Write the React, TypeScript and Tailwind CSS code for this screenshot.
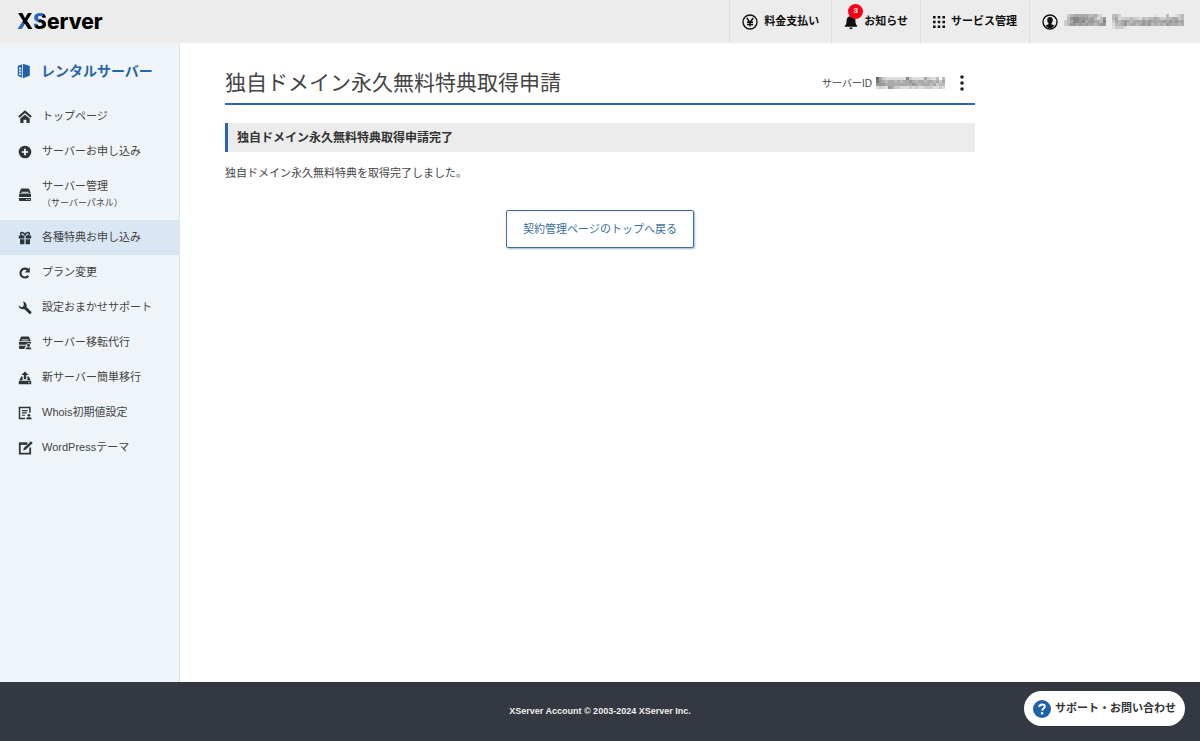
import type { ReactNode } from "react";

type Icon = () => ReactNode;

const HomeIcon: Icon = () => (
  <svg viewBox="0 0 14 14" className="h-3.5 w-3.5" fill="none" aria-hidden="true">
    <path d="M.8 7 7 1.700l6.200 5.300" stroke="currentColor" strokeWidth="2.200" />
    <path d="M2.300 8.600 7 4.700l4.700 3.900V13H8.500V9.800h-3V13H2.300z" fill="currentColor" />
  </svg>
);

const PlusIcon: Icon = () => (
  <svg viewBox="0 0 14 14" className="h-3.5 w-3.5" aria-hidden="true">
    <circle cx="7" cy="7" r="6.300" fill="currentColor" />
    <path d="M7 3.800v6.400M3.800 7h6.400" stroke="#fff" strokeWidth="1.700" />
  </svg>
);

const DriveIcon: Icon = () => (
  <svg viewBox="0 0 14 14" className="h-3.5 w-3.5" fill="currentColor" aria-hidden="true">
    <path d="M4 .6h6q1 0 1.400 1l1.400 3.800H1.200L2.600 1.600q.4-1 1.400-1zM1.800 6h10.400q.8 0 .8.800V9H1V6.800q0-.8.8-.8zM1 9.900h12v2.400q0 .8-.8.8H1.800q-.8 0-.8-.8z" />
    <path d="M3.600 4.300h6.800" stroke="#fff" strokeWidth=".9" />
    <path d="M8.200 11.500h1.100M10.600 11.500h1.100" stroke="#fff" strokeWidth="1" />
  </svg>
);

const GiftIcon: Icon = () => (
  <svg viewBox="0 0 14 14" className="h-3.5 w-3.5" aria-hidden="true">
    <path d="M.8 4.400h5.600v3H.8zM7.600 4.400h5.600v3H7.600zM2 8.200h4.400V13.200H2zM7.600 8.200H12V13.200H7.600z" fill="currentColor" />
    <path d="M7 4.400C6 1 2.600.8 2.600 2.800c0 1 .8 1.600 1.800 1.600M7 4.400c1-3.400 4.400-3.600 4.400-1.600 0 1-.8 1.600-1.800 1.600" fill="none" stroke="currentColor" strokeWidth="1.500" />
  </svg>
);

const ReloadIcon: Icon = () => (
  <svg viewBox="0 0 14 14" className="h-3.5 w-3.5" aria-hidden="true">
    <path d="M10.300 9.900A4.400 4.400 0 1 1 9.800 3.800" fill="none" stroke="currentColor" strokeWidth="2.200" />
    <path d="M11.800 1.300v5.200H6.700z" fill="currentColor" />
  </svg>
);

const WrenchIcon: Icon = () => (
  <svg viewBox="0 0 14 14" className="h-3.5 w-3.5" aria-hidden="true">
    <path
      d="M5 .6A4 4 0 0 1 8.500 5.900l4.600 4.600q.9 1.100-.1 2.100t-2.100 0L6.100 8A4 4 0 0 1 .6 4.300l2.500 2 2.200-.9.600-2.300z"
      fill="currentColor"
    />
  </svg>
);

const DriveUserIcon: Icon = () => (
  <svg viewBox="0 0 14 14" className="h-3.5 w-3.5" fill="currentColor" aria-hidden="true">
    <path d="M4 .6h6q1 0 1.400 1l1.400 3.600H1.200L2.600 1.600q.4-1 1.400-1zM1 6h12v1.600h-1a2.500 2.500 0 0 0-3.800 1.200H1zM1 9.800h7.200l-.2.800-1.400 1v1.500H1.800q-.8 0-.8-.8z" />
    <circle cx="10.500" cy="9.200" r="1.500" />
    <path d="M7.600 13.200q0-2 1.800-2h2.200q1.800 0 1.800 2z" />
    <path d="M3.600 3.900h6.800" stroke="#fff" strokeWidth=".9" />
  </svg>
);

const UploadIcon: Icon = () => (
  <svg viewBox="0 0 14 14" className="h-3.5 w-3.5" aria-hidden="true">
    <path d="M7 .4 10.600 4H8.200v4.200H5.800V4H3.400z" fill="currentColor" />
    <path d="M3.200 5.400h1.400v3.900h4.800V5.400h1.400l2 4H1.200zM.8 10h12.400v3.200H.8z" fill="currentColor" />
    <path d="M10 11.700h1.600" stroke="#fff" strokeWidth=".8" />
  </svg>
);

const WhoisIcon: Icon = () => (
  <svg viewBox="0 0 14 14" className="h-3.5 w-3.5" aria-hidden="true">
    <path d="M7 12.400H1.500V1.500h10.400v5.300" fill="none" stroke="currentColor" strokeWidth="1.500" />
    <path d="M4 4.600h5.600M4 6.900h4.800M4 9.200h3" stroke="currentColor" strokeWidth="1.100" />
    <circle cx="10.900" cy="9.300" r="1.400" fill="currentColor" />
    <path d="M8 13.200q0-2 1.800-2h2.200q1.800 0 1.800 2z" fill="currentColor" />
  </svg>
);

const EditIcon: Icon = () => (
  <svg viewBox="0 0 14 14" className="h-3.5 w-3.5 overflow-visible" aria-hidden="true">
    <path d="M9.400 2.400H1.800v10.200h10.400V6.600" fill="none" stroke="currentColor" strokeWidth="1.800" />
    <path d="M1 1.600h8v2.200H1z" fill="currentColor" />
    <path d="m5.200 9.400.6-2.400L13 .2l1.700 1.800-7.100 6.800z" fill="currentColor" />
  </svg>
);

const YenIcon: Icon = () => (
  <svg viewBox="0 0 16 16" className="h-4 w-4" fill="none" stroke="currentColor" aria-hidden="true">
    <circle cx="8" cy="8" r="7" strokeWidth="1.400" />
    <path d="m4.800 4 3.200 4.400L11.200 4M8 8v4.600M5 8.200h6M5 10.400h6" strokeWidth="1.500" />
  </svg>
);

const BellIcon: Icon = () => (
  <svg viewBox="0 0 14 16" className="h-4 w-3.5" fill="currentColor" aria-hidden="true">
    <path d="M7 1q1 0 1 1.200c2.300.5 3.400 2.100 3.400 4.300 0 3.300.7 4.300 1.800 5.300v1H.8v-1c1.100-1 1.800-2 1.800-5.300C2.600 4.300 3.700 2.700 6 2.200 6 1.400 6.300 1 7 1zM5.300 13.600h3.400a1.700 1.700 0 0 1-3.400 0z" />
  </svg>
);

const GridIcon: Icon = () => (
  <svg viewBox="0 0 12 12" className="h-3 w-3" fill="currentColor" aria-hidden="true">
    <path d="M0 0h2.600v2.600H0zM4.700 0h2.600v2.600H4.700zM9.400 0H12v2.600H9.400zM0 4.700h2.600v2.600H0zM4.700 4.700h2.600v2.600H4.700zM9.400 4.700H12v2.600H9.400zM0 9.400h2.600V12H0zM4.700 9.400h2.600V12H4.700zM9.400 9.400H12V12H9.400z" />
  </svg>
);

const UserIcon: Icon = () => (
  <svg viewBox="0 0 16 16" className="h-4 w-4" aria-hidden="true">
    <circle cx="8" cy="8" r="7" fill="none" stroke="currentColor" strokeWidth="1.400" />
    <path d="M8 3c1.800 0 2.800 1.200 2.800 2.900S9.900 8.700 9.500 9.200v1l3 1.400A6 6 0 0 1 8 14.400a6 6 0 0 1-4.500-2.800l3-1.400v-1C6.100 8.700 5.200 7.600 5.200 5.900S6.200 3 8 3z" fill="currentColor" />
  </svg>
);

const ServerLogo: Icon = () => (
  <svg viewBox="0 0 14 16" className="h-4 w-3.5" aria-hidden="true">
    <path d="M6 .8 12.800 3v9.800L6 15.200z" fill="#2161a9" />
    <path d="M5.200 1.200.8 3v9.800l4.400 2z" fill="#2161a9" />
    <path d="M2 4.600h2.200v2H2zM2 7.600h2.200v2H2zM2 10.600h2.200v1.800L2 11.800z" fill="#dfe9f4" />
  </svg>
);

const menu: { label: string; note?: string; icon: Icon; active?: boolean }[] = [
  { label: "トップページ", icon: HomeIcon },
  { label: "サーバーお申し込み", icon: PlusIcon },
  { label: "サーバー管理", note: "（サーバーパネル）", icon: DriveIcon },
  { label: "各種特典お申し込み", icon: GiftIcon, active: true },
  { label: "プラン変更", icon: ReloadIcon },
  { label: "設定おまかせサポート", icon: WrenchIcon },
  { label: "サーバー移転代行", icon: DriveUserIcon },
  { label: "新サーバー簡単移行", icon: UploadIcon },
  { label: "Whois初期値設定", icon: WhoisIcon },
  { label: "WordPressテーマ", icon: EditIcon },
];

// One hex digit per cell, 0 = dark, f = white, "." = empty
const nameCells = [
  ".cbaaaaabbacd...bbc...........d...b..dcb",
  ".b988999a9bdb9..badcccbccdbcbbabccbbaacb",
  "cba8898a99aab8..caba9abaaa9a9aaaa9a9a9aa",
  "cb99a9a9aaba99..dbba9baaba9a9babab9aaaba",
  "................dcccd...................",
];
const idCells = [
  "6acddddddd8cddddacddb.b",
  "79abaababaa9abaabaabaca",
  "999aaaaaaaaa9abaaabacbb",
  "dcdd9accdddcdcddcccddcd",
];

const Mosaic = ({ cells, size, label }: { cells: string[]; size: number; label: string }) => (
  <svg
    role="img"
    aria-label={label}
    width={cells[0].length * size}
    height={cells.length * 3}
    shapeRendering="crispEdges"
    className="shrink-0"
  >
    {cells.map((row, y) =>
      row.split("").map((c, x) =>
        c === "." ? null : (
          <rect key={`${x}-${y}`} x={x * size} y={y * 3} width={size} height="3" fill={`#${c}${c}${c}`} />
        )
      )
    )}
  </svg>
);

const Header = () => (
  <header className="flex h-[43px] items-stretch justify-between bg-[#ececec] text-[#111]">
    <a
      href="#"
      aria-label="XServer"
      className="flex items-center pl-[17px] font-[Inter,sans-serif] text-[21px] leading-none font-extrabold text-black"
    >
      <span className="bg-linear-to-tr from-[#2868b8] from-42% to-black to-42% bg-clip-text text-transparent">X</span>
      <span className="bg-linear-to-br from-[#2868b8] from-45% to-black to-45% bg-clip-text text-transparent">S</span>
      <span>erver</span>
    </a>
    <nav className="flex text-[11px] font-bold">
      <a href="#" className="flex items-center gap-1.5 border-l border-[#dcdcdc] px-3">
        <YenIcon />
        料金支払い
      </a>
      <a href="#" className="flex items-center gap-1.5 border-l border-[#dcdcdc] px-3">
        <span className="relative">
          <BellIcon />
          <span className="absolute -top-2.5 left-1 flex h-[15px] w-[15px] items-center justify-center rounded-full bg-[#fa0014] text-[8px] text-white">
            3
          </span>
        </span>
        お知らせ
      </a>
      <a href="#" className="flex items-center gap-1.5 border-l border-[#dcdcdc] px-3">
        <GridIcon />
        サービス管理
      </a>
      <a href="#" className="flex items-center gap-1.5 border-l border-[#dcdcdc] pr-4 pl-3">
        <UserIcon />
        <Mosaic cells={nameCells} size={3} label="アカウント名" />
      </a>
    </nav>
  </header>
);

const Sidebar = () => (
  <aside className="w-[180px] shrink-0 border-r border-[#dfe4e8] bg-[#eff4f8]">
    <a href="#" className="flex h-14 items-center gap-2.5 pl-[17px] text-sm font-bold text-[#2565a8]">
      <ServerLogo />
      レンタルサーバー
    </a>
    <ul>
      {menu.map(({ label, note, icon: ItemIcon, active }) => (
        <li key={label}>
          <a
            href="#"
            aria-current={active ? "page" : undefined}
            className={
              active
                ? "flex min-h-[35px] items-center gap-2.5 bg-[#d9e6f3] pl-[18px] text-[11px] text-[#444]"
                : "flex min-h-[35px] items-center gap-2.5 pl-[18px] text-[11px] text-[#444]"
            }
          >
            <span className="text-[#2e343b]">
              <ItemIcon />
            </span>
            <span className={note ? "py-2 leading-[18px]" : undefined}>
              {label}
              {note && <small className="block text-[9px] leading-[17px]">{note}</small>}
            </span>
          </a>
        </li>
      ))}
    </ul>
  </aside>
);

const Main = () => (
  <main className="min-w-0 flex-1 px-[45px] pt-5">
    <div className="max-w-[750px]">
      <div className="flex h-[42px] items-center justify-between border-b-2 border-[#2868b0]">
        <h1 className="text-[21px] text-[#444]">独自ドメイン永久無料特典取得申請</h1>
        <div className="flex items-center gap-1 text-[10px] text-[#444]">
          サーバーID
          <Mosaic cells={idCells} size={3} label="サーバーID" />
          <button type="button" aria-label="メニュー" className="px-[11px] py-1">
            <svg viewBox="0 0 4 16" className="h-4 w-1" fill="#222" aria-hidden="true">
              <circle cx="2" cy="2" r="1.800" />
              <circle cx="2" cy="8" r="1.800" />
              <circle cx="2" cy="14" r="1.800" />
            </svg>
          </button>
        </div>
      </div>
      <h2 className="mt-[18px] flex h-[29px] items-center border-l-[3px] border-[#2868b0] bg-[#ececec] pl-[9px] text-xs font-bold text-[#333]">
        独自ドメイン永久無料特典取得申請完了
      </h2>
      <p className="mt-3 text-[11px] leading-[18px] text-[#444]">独自ドメイン永久無料特典を取得完了しました。</p>
      <div className="mt-7 flex justify-center">
        <button
          type="button"
          className="h-[38px] rounded-xs border border-[#3a70a8] bg-white px-4 text-[11px] text-[#3a70a0] shadow-[1px_1px_2px_#3a70a880]"
        >
          契約管理ページのトップへ戻る
        </button>
      </div>
    </div>
  </main>
);

export default function App() {
  return (
    <div className="flex min-h-screen flex-col bg-white font-['Liberation_Sans','Noto_Sans_CJK_JP',sans-serif]">
      <Header />
      <div className="flex flex-1">
        <Sidebar />
        <Main />
      </div>
      <footer className="flex h-[59px] items-center justify-center bg-[#343840] text-[9px] font-bold text-[#eee]">
        XServer Account © 2003-2024 XServer Inc.
      </footer>
      <button
        type="button"
        className="fixed right-[15px] bottom-[15px] flex h-[35px] items-center gap-1 rounded-full bg-white px-[9px] text-[11px] font-bold text-[#333]"
      >
        <svg viewBox="0 0 18 18" className="h-[18px] w-[18px]" aria-hidden="true">
          <circle cx="9" cy="9" r="9" fill="#2161a9" />
          <path d="M6.300 7q0-2.600 2.800-2.600T11.800 6.800c0 1.700-2.700 1.700-2.700 3.800" fill="none" stroke="#fff" strokeWidth="2" />
          <circle cx="9.100" cy="13.200" r="1.200" fill="#fff" />
        </svg>
        サポート・お問い合わせ
      </button>
    </div>
  );
}
